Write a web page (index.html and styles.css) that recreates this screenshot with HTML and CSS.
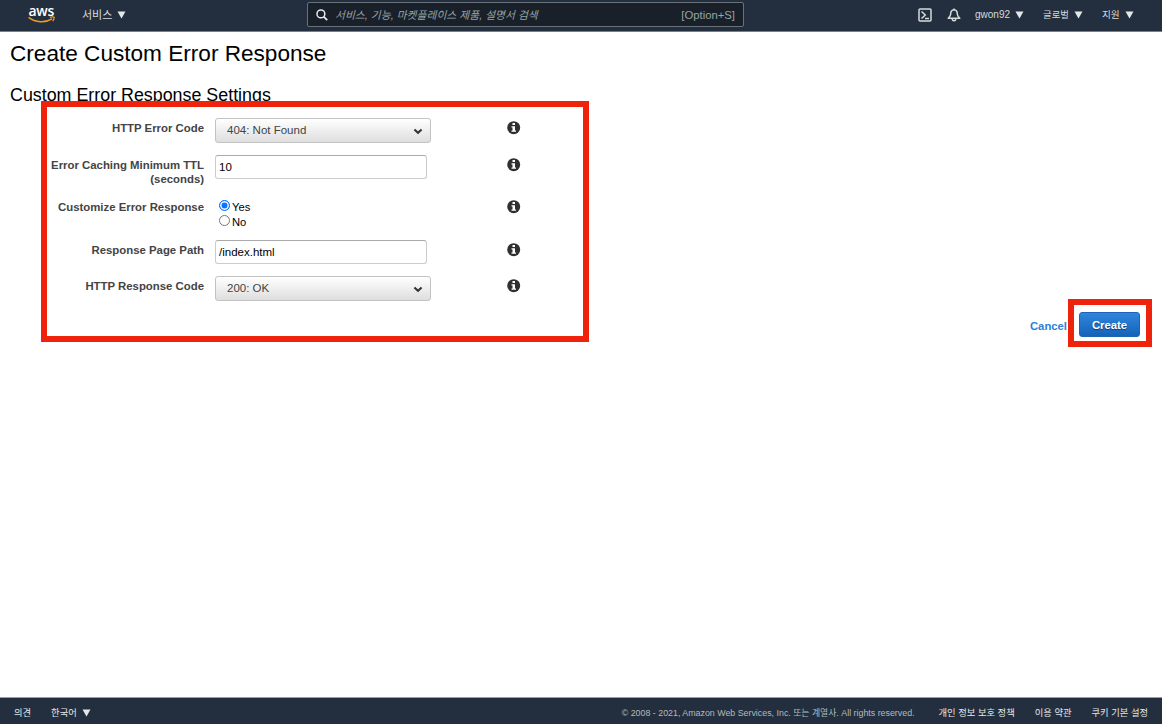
FILE: index.html
```html
<!DOCTYPE html>
<html lang="ko">
<head>
<meta charset="utf-8">
<title>Create Custom Error Response</title>
<link rel="stylesheet" href="styles.css">
</head>
<body>
<svg class="defs" width="0" height="0">
  <symbol id="info" viewBox="0 0 14 14"><circle cx="6.700" cy="6.700" r="6.500" fill="#303030"/><path fill="#fff" d="M5.500 2h2.500v2H5.500zM4.500 5.200H8v4.200h1v1.400H4.500V9.400h1V6.600h-1z"/></symbol>
  <symbol id="caret" viewBox="0 0 9 8"><path fill="currentColor" d="M.5.5h8L4.500 7.500z"/></symbol>
  <symbol id="chevron" viewBox="0 0 10 7"><path fill="none" stroke="#333" stroke-width="2" d="M1.4 1.5 5 4.8l3.6-3.3"/></symbol>
</svg>
<header class="topbar">
  <a class="logo"><span class="logo-text">aws</span>
    <svg class="smile" viewBox="0 0 27 8"><path fill="none" stroke="#f79a1c" stroke-width="1.5" d="M.6 1.3C7.500 6.700 17.500 7 24 2.900"/><path fill="none" stroke="#f79a1c" stroke-width="1.200" d="M21.800 1.300C24 .7 26.300.9 26.200 1.500 26.200 2.600 25.600 4 24.700 5.200"/></svg>
  </a>
  <nav class="services"><span>서비스</span><svg class="caret"><use href="#caret"/></svg></nav>
  <div class="search">
    <svg class="lens" viewBox="0 0 12 12"><circle cx="4.900" cy="4.900" r="3.900" fill="none" stroke="#e6eaea" stroke-width="1.500"/><path d="m7.700 7.700 3.500 3.500" stroke="#e6eaea" stroke-width="1.800"/></svg>
    <span class="placeholder">서비스, 기능, 마켓플레이스 제품, 설명서 검색</span>
    <span class="shortcut">[Option+S]</span>
  </div>
  <svg class="shell" viewBox="0 0 14 14"><rect x="1" y="1" width="12" height="12" rx="1" fill="none" stroke="#d5dbdb" stroke-width="1.500"/><path d="m3.500 3.500 3.800 3.500-3.800 3.500M7 10.500h4" fill="none" stroke="#d5dbdb" stroke-width="1.500"/></svg>
  <svg class="bell" viewBox="0 0 14 14"><path d="M7 1.700C4.600 2 3.700 3.600 3.700 5.700 3.700 8 2.800 8.500 1.200 10.200h11.600C11.200 8.500 10.300 8 10.300 5.700 10.300 3.600 9.400 2 7 1.700zM7 .5v1.300M5.200 10.500c0 3 3.600 3 3.600 0" fill="none" stroke="#d5dbdb" stroke-width="1.500" stroke-linejoin="round"/></svg>
  <nav class="account"><span>gwon92</span><svg class="caret"><use href="#caret"/></svg></nav>
  <nav class="region"><span>글로벌</span><svg class="caret"><use href="#caret"/></svg></nav>
  <nav class="support"><span>지원</span><svg class="caret"><use href="#caret"/></svg></nav>
</header>
<main>
  <h1>Create Custom Error Response</h1>
  <h2>Custom Error Response Settings</h2>
  <form class="settings">
    <div class="row row-code"><label>HTTP Error Code</label><div class="select"><span>404: Not Found</span><svg class="chevron"><use href="#chevron"/></svg></div><svg class="info"><use href="#info"/></svg></div>
    <div class="row row-ttl"><label>Error Caching Minimum TTL<br>(seconds)</label><div class="input">10</div><svg class="info"><use href="#info"/></svg></div>
    <div class="row row-custom"><label>Customize Error Response</label>
      <div class="radios"><div class="option"><i class="radio checked"></i>Yes</div><div class="option"><i class="radio"></i>No</div></div>
      <svg class="info"><use href="#info"/></svg></div>
    <div class="row row-path"><label>Response Page Path</label><div class="input">/index.html</div><svg class="info"><use href="#info"/></svg></div>
    <div class="row"><label>HTTP Response Code</label><div class="select"><span>200: OK</span><svg class="chevron"><use href="#chevron"/></svg></div><svg class="info"><use href="#info"/></svg></div>
  </form>
  <div class="actions"><a class="cancel">Cancel</a><div class="create">Create</div></div>
</main>
<footer>
  <span class="feedback">의견</span>
  <span class="language"><span>한국어</span><svg class="caret"><use href="#caret"/></svg></span>
  <span class="copyright">© 2008 - 2021, Amazon Web Services, Inc. 또는 계열사. All rights reserved.</span>
  <span class="privacy">개인 정보 보호 정책</span>
  <span class="terms">이용 약관</span>
  <span class="cookies">쿠키 기본 설정</span>
</footer>
<div class="mark mark-form"></div>
<div class="mark mark-create"></div>
</body>
</html>
```
FILE: styles.css
```css
* { box-sizing: border-box; }
body {
  margin: 0;
  height: 724px;
  display: flex;
  flex-direction: column;
  position: relative;
  overflow: hidden;
  background: #fff;
  color: #000;
  font: 11px/14px "Liberation Sans", "Noto Sans CJK KR", sans-serif;
}
svg { display: block; flex: none; }
.defs { position: absolute; }
span { white-space: nowrap; }

.topbar {
  height: 32px;
  flex: none;
  display: flex;
  align-items: flex-start;
  background: #232f3e;
  border-bottom: 1px solid #777f88;
  color: #d5dbdb;
}
.logo { width: 27px; margin-left: 28px; padding-top: 3px; }
.logo-text {
  display: block;
  height: 14px;
  color: #fff;
  font: 600 14px/16px "Open Sans", sans-serif;
  letter-spacing: -.3px;
  text-indent: .5px;
}
.smile { width: 27px; height: 8px; margin-top: -1px; }
.topbar nav {
  display: flex;
  align-items: center;
  justify-content: space-between;
  height: 14px;
  margin-top: 8px;
  font-size: 10px;
}
.caret { width: 9px; height: 8px; color: #e3e7e7; }
.topbar .services { width: 44px; margin-left: 27px; font-size: 11px; }
.search {
  width: 437px;
  height: 25px;
  margin: 2px 0 0 181px;
  padding: 0 8px 0 8px;
  display: flex;
  align-items: center;
  border: 1px solid #687078;
  border-radius: 2px;
  background: #1a2029;
  color: #95a5a6;
  font-size: 10.8px;
}
.lens { width: 12px; height: 12px; margin-right: 7px; }
.placeholder { font-style: italic; }
.shortcut { margin-left: auto; font-size: 11.3px; }
.shell { width: 14px; height: 14px; margin: 8px 0 0 174px; }
.bell { width: 14px; height: 14px; margin: 8px 0 0 15px; }
.topbar .account { width: 49px; margin-left: 14px; }
.topbar .region { width: 40px; margin-left: 19px; font-size: 9.4px; }
.topbar .support { width: 32px; margin-left: 19px; font-size: 9.6px; }

main { flex: 1; }
h1, h2 { margin: 0 0 0 10px; font-weight: 400; white-space: nowrap; }
h1 { font-size: 22.6px; line-height: 28px; padding-top: 8px; }
h2 { font-size: 17.85px; line-height: 22px; margin-top: 16px; }
.settings { width: 588px; margin-top: 12px; }
.row { display: grid; grid-template-columns: 204px 216px 14px; column-gap: 11px; align-items: start; }
.row .info { width: 14px; height: 14px; margin: 3px 0 0 65px; }
.row-code { height: 37px; }
.row-ttl { height: 42px; }
.row-custom { height: 43px; }
.row-path { height: 36px; }
label { padding-top: 3px; text-align: right; font-weight: 700; font-size: 11.38px; color: #444; white-space: nowrap; }
.select {
  height: 25px;
  padding: 0 7px 0 11px;
  display: flex;
  align-items: center;
  justify-content: space-between;
  border: 1px solid #c3c3c3;
  border-radius: 3px;
  background: linear-gradient(#fff, #dedede);
  color: #444;
  font-size: 11.5px;
}
.select span { margin-top: -1px; }
.chevron { width: 10px; height: 7px; margin-top: 2px; }
.input {
  width: 212px;
  height: 24px;
  padding: 0 3px;
  line-height: 22px;
  border: 1px solid #ccc;
  border-top-color: #aaa;
  border-radius: 3px;
  font-size: 11.5px;
}
.radios { padding: 3px 0 0 4px; }
.option { display: flex; height: 15px; line-height: 14px; gap: 2px; font-size: 11.2px; }
.radio { width: 11px; height: 11px; border: 1px solid #767676; border-radius: 50%; background: #fff; }
.radio.checked { border: 1px solid #0b75ff; background: #0b75ff; box-shadow: inset 0 0 0 1.5px #fff; }
.actions { display: flex; justify-content: flex-end; align-items: center; gap: 12px; height: 25px; padding-right: 22px; margin-top: 11px; font-size: 11.3px; font-weight: 700; }
.cancel { color: #2e7fd6; padding-top: 2px; }
.create {
  width: 61px;
  height: 25px;
  border: 1px solid #1e66b5;
  border-radius: 3px;
  background: linear-gradient(#2f86dc, #1463b9);
  color: #fff;
  line-height: 24px;
  text-align: center;
  text-shadow: 0 1px 1px #123c70;
}
footer {
  height: 27px;
  flex: none;
  display: flex;
  align-items: center;
  padding: 3px 14px 0 14px;
  background: #232f3e;
  border-top: 1px solid #999fa4;
  color: #e3e7e7;
  font-size: 9.3px;
}
.language { display: flex; align-items: center; justify-content: space-between; width: 40px; margin-left: 20px; }
.copyright { margin-left: auto; color: #b3babd; font-size: 8.85px; }
.privacy { margin-left: 24px; }
.terms { margin-left: 20px; }
.cookies { margin-left: 20px; }

/* Highlight frames drawn over the form and the submit button */
.mark { position: absolute; border: 6px solid #ef220c; }
.mark-form { left: 41px; top: 101px; width: 548px; height: 241px; }
.mark-create { left: 1068px; top: 299px; width: 84px; height: 48px; }
```
